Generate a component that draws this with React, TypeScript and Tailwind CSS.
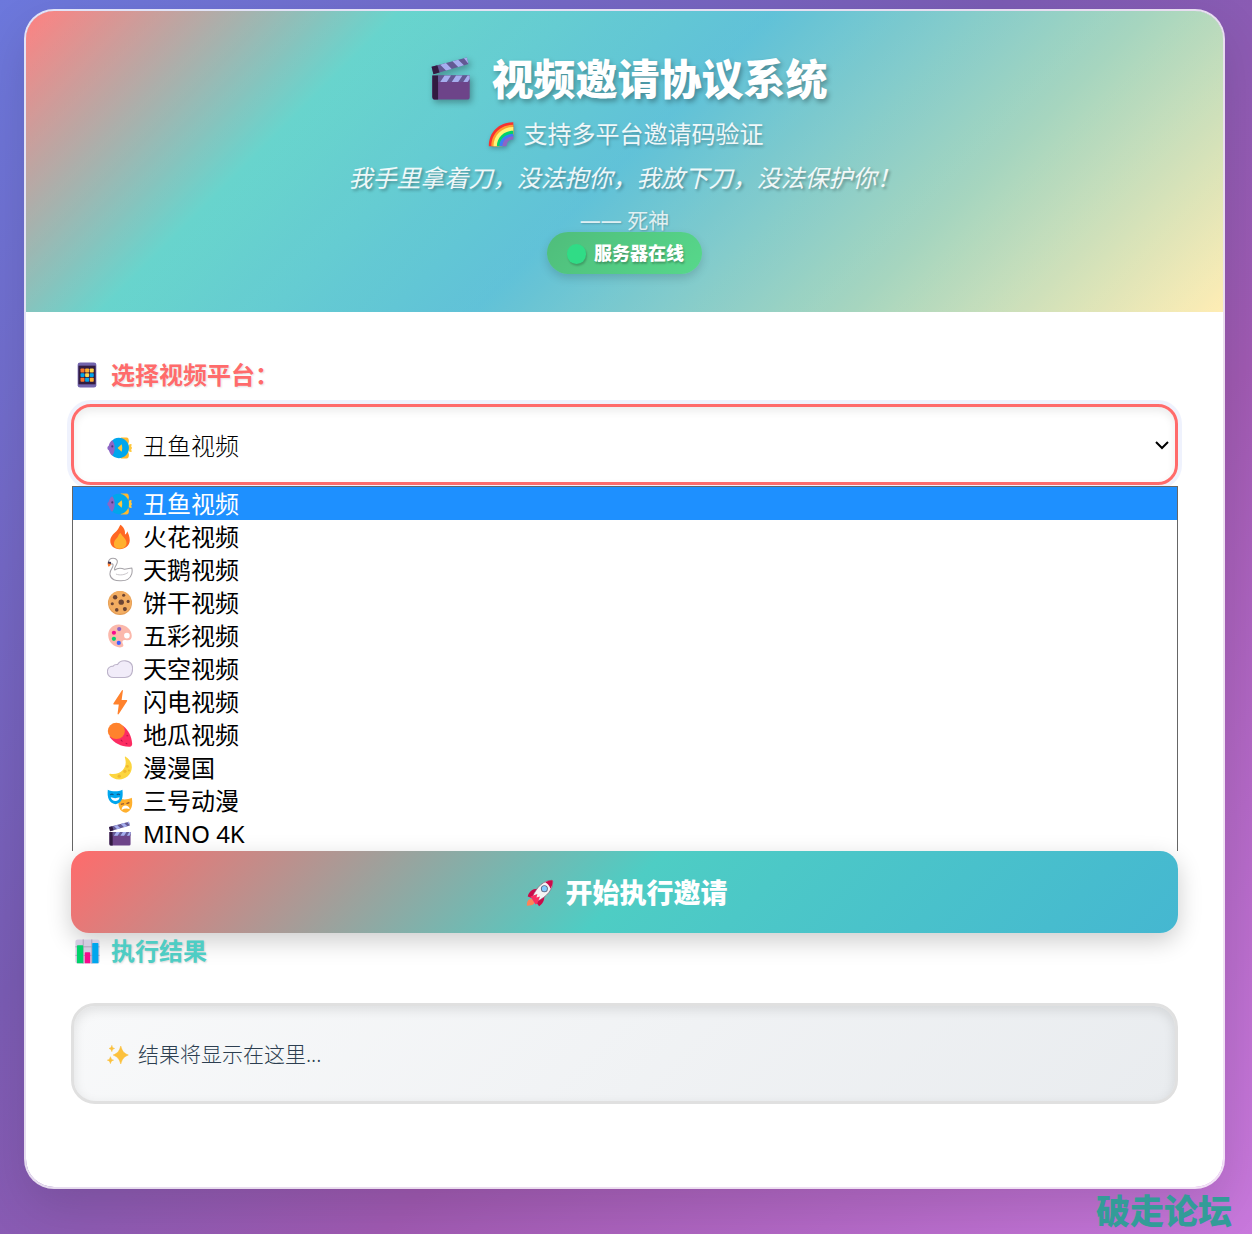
import { useState } from 'react';
import type { ReactNode } from 'react';

type IconProps = { className?: string };

function Glyph({ className = 'size-[26px]', children }: IconProps & { children: ReactNode }) {
  return (
    <svg viewBox="0 0 32 32" aria-hidden="true" className={`shrink-0 ${className}`}>
      {children}
    </svg>
  );
}

function Clapper({ className }: IconProps) {
  return (
    <Glyph className={className}>
      <path d="M3 13.500h26v15a1.800 1.800 0 0 1-1.800 1.800H5A2 2 0 0 1 3 28.300z" fill="#6d4489" />
      <path d="M3 13.500h4v16.800H5a2 2 0 0 1-2-2z" fill="#321b41" />
      <path d="M7 13.500h22V18H7z" fill="#635994" />
      <path d="M11.500 13.500H16L13 18H8.500zM19.500 13.500H24L21 18h-4.500zM27.500 13.500H29V16l-1.500 2h-3z" fill="#a6aeef" />
      <path d="M2.500 7.500 27 1l1.200 4.500L3.800 12.700z" fill="#635994" />
      <path d="m2.500 7.500 4-1 1.500 5-4.200 1.200z" fill="#321b41" />
      <path d="m8.500 6 4-1.100 4 4.100-4 1.100zM17 3.700l4-1.100 4 3.900-4 1.100zM25 1.600 27 1l1.200 4.500z" fill="#a6aeef" />
    </Glyph>
  );
}

function Rainbow({ className }: IconProps) {
  return (
    <Glyph className={className}>
      <path d="M1 30C1 13 13 1.500 30 1.500V17c-7 0-13 6-13 13z" fill="#f8312f" />
      <path d="M4 30C4 15 15 4.500 30 4.500V17c-7 0-13 6-13 13z" fill="#ff9f2e" />
      <path d="M6.500 30C6.500 16.500 16.500 7 30 7v10c-7 0-13 6-13 13z" fill="#fff478" />
      <path d="M10.500 30C10.500 19.500 19 11.500 30 11.500v6c-7 0-13 6-13 12.500z" fill="#00d26a" />
      <path d="M13.500 30C13.500 21 21 15 30 15v4c-7 0-12 4-12 11z" fill="#3f7cf5" />
      <path d="M17 30c0-7 6-12 13-12v4c-5 0-8 3-8 8z" fill="#8d65c5" />
    </Glyph>
  );
}

function Phone({ className }: IconProps) {
  return (
    <Glyph className={className}>
      <rect x="4.500" y="0.500" width="23" height="31" rx="3" fill="#7264ad" />
      <path d="M5.500 4.500h21v23h-21z" fill="#321b41" />
      {['#f9782d', '#ffb02e', '#ffd447', '#00a6ed', '#ffd447', '#00a6ed', '#f9782d', '#00a6ed', '#ffb02e'].map((fill, i) => (
        <rect key={i} x={8 + (i % 3) * 5.700} y={8 + Math.floor(i / 3) * 5.700} width="4.900" height="4.900" rx="1" fill={fill} />
      ))}
    </Glyph>
  );
}

function Fish({ className }: IconProps) {
  return (
    <Glyph className={className}>
      <path d="M17 3h7c2 0 3 2 3 5l-1 4v8l1 4c0 3-1 5-3 5h-7z" fill="#ffb92e" />
      <path d="M26 16c0-3 1-5 3.500-5 1 0 1 1 .6 2-.5 1-.5 1.500.5 2v2c-1 .5-1 1-.5 2 .4 1 .4 2-.6 2-2.500 0-3.500-2-3.500-5z" fill="#ffc83d" />
      <path d="M14.500 3.500C21.500 3.500 27 9 27 16s-5.500 12.500-12.500 12.500c-4 0-7.500-2-9.500-5v-15c2-3 5.500-5 9.500-5z" fill="#00a6ed" />
      <path d="M6.500 6.500c4 5 4 14 0 19-3-2-3.500-5-4.500-7-1-.5-1.500-1.500-1.500-2.500s.5-2 1.500-2.500c1-3 1.500-5 4.500-7z" fill="#8d65c5" />
      <circle cx="6.500" cy="14" r="1.300" fill="#4b3a79" />
      <path d="m13 16 5-4.500c1 2.500 1 6.500 0 9z" fill="#ffc83d" />
    </Glyph>
  );
}

function Fire({ className }: IconProps) {
  return (
    <Glyph className={className}>
      <path d="M16.500 1c-2 3-2 5-5 8C8 12 4 16 4 21c0 6 5 10 11.500 10S28 27 28 20c0-5-2-8-3-11-.5 2-2 4-3 4 1-5-2-10-5.500-12z" fill="#ff6723" />
      <path d="M16.500 11c-2 1-2 3-4 6-2 2-4 4-4 7.500 0 4 3.500 6 7.500 6s8-2 8-7c0-5-4-7-7.500-12.500z" fill="#ffb02e" />
    </Glyph>
  );
}

function Swan({ className }: IconProps) {
  return (
    <Glyph className={className}>
      <path d="M1.500 7C2 3 4.500 1.500 7.500 1.500c5 0 6.500 4 4 8-1.500 3-3 4.500-2 6.500 4-3 8-2.500 12-1l9-1.500c1 4 .5 11-5 14-3 2-13 2.500-17 .5-6-3-6-9-2.500-14C8 11 8 8 6 8.500 4.500 9 3 8.500 1.500 7z" fill="#fff" stroke="#a6a3a8" strokeWidth="1.300" strokeLinejoin="round" />
      <path d="M11 21c5 2 11 1 15-2" fill="none" stroke="#bbb8bd" strokeWidth="1" />
      <path d="M1 7.500 5 8c0 2-1.500 3-3 4-1-1-1.300-3-1-4.500z" fill="#ff7b2e" />
      <path d="M1.500 5.500 5 6v2.500L1 8z" fill="#40324a" />
    </Glyph>
  );
}

function Cookie({ className }: IconProps) {
  return (
    <Glyph className={className}>
      <circle cx="16" cy="16" r="14.800" fill="#e39d56" />
      <circle cx="16" cy="15.300" r="14" fill="#f3ad61" />
      <g fill="#6d4534">
        <circle cx="10" cy="9" r="2.700" />
        <circle cx="20.500" cy="6.500" r="1.900" />
        <circle cx="17.500" cy="15" r="3.300" />
        <circle cx="26" cy="14" r="1.900" />
        <circle cx="6.500" cy="17" r="1.900" />
        <circle cx="12" cy="24.500" r="2.200" />
        <circle cx="22" cy="23.500" r="2.500" />
      </g>
    </Glyph>
  );
}

function Palette({ className }: IconProps) {
  return (
    <Glyph className={className}>
      <path
        fillRule="evenodd"
        d="M16 2C7 1 1 8 1.500 15.500 2 24 8 29.500 16 30c4 0 5-2 3.500-4.500-1.500-3 0-5 3.500-4.500 5 1 7.500-1 7.500-5C30.500 8 24 2.500 16 2zm8.500 10a3.500 3.500 0 1 1 0 7 3.500 3.500 0 0 1 0-7z"
        fill="#fbb8ab"
      />
      <circle cx="15" cy="7.500" r="2.600" fill="#8d65c5" />
      <circle cx="8.500" cy="12" r="2.600" fill="#f70a8d" />
      <circle cx="8.500" cy="19.500" r="2.600" fill="#00d26a" />
      <circle cx="14.500" cy="24.500" r="2.600" fill="#3f5fff" />
    </Glyph>
  );
}

function Cloud({ className }: IconProps) {
  return (
    <Glyph className={className}>
      <path d="M8 26.500c-4.500 0-7.500-3-7.500-7.500 0-4 3-6.500 7-6.500 1-1.500 3-2.200 5.500-2C15 7 19 5.500 23 6c5 .6 8.500 4 8.500 9.500 0 7-3.500 11-9.500 11z" fill="#f1ecf9" stroke="#bcb3c9" strokeWidth="1.400" />
    </Glyph>
  );
}

function Bolt({ className }: IconProps) {
  return (
    <Glyph className={className}>
      <path d="M18.500 1.500 8 17.500c-.5 1 0 1.500 1 1.500h5.500L13 30.500c0 1 1 1 1.500.3L24.700 15c.5-1 0-1.500-1-1.500H18L19.600 2c0-1-.6-1-1.100-.5z" fill="#ff822d" />
    </Glyph>
  );
}

function Potato({ className }: IconProps) {
  return (
    <Glyph className={className}>
      <path d="M20 5c7 6 10 12 11 22 0 2.500-2 3.500-4 3.500C17 30 9 26 3 18z" fill="#fc2c62" />
      <path d="m17 22 2 2m5-7 2 0m-3 9 2 1" stroke="#ba1246" strokeWidth="1.300" fill="none" />
      <ellipse cx="11.500" cy="11" rx="10.500" ry="10" fill="#ff822d" />
    </Glyph>
  );
}

function Moon({ className }: IconProps) {
  return (
    <Glyph className={className}>
      <path d="M23 2c5 3 8 8 7.500 14C30 24 23 30 15 30c-5 0-9-2-12-5.500-.5-1 0-1.500 1-1.300 6 1 12-.5 15.500-4.700S24 9 22 3c-.2-1 .3-1.400 1-1z" fill="#fcd53f" />
      <g fill="#efb830">
        <circle cx="25" cy="14" r="1.800" />
        <circle cx="22" cy="20" r="2" />
        <circle cx="15" cy="26" r="2" />
        <circle cx="27" cy="19" r="1.200" />
      </g>
    </Glyph>
  );
}

function Masks({ className }: IconProps) {
  return (
    <Glyph className={className}>
      <path d="M14.500 13c5 1.500 11 1.500 16-1 1.500 8 .5 16-7 18.500-8-1-10.500-8-9-17.500z" fill="#ffb02e" />
      <path d="m17 20 4-.5m3-.5 3.500-1" stroke="#7d4533" strokeWidth="1.300" fill="none" />
      <path d="M18 27c0-7 9-7 10-1q-5-2-10 1z" fill="#fff" />
      <path d="M1 2c5 2.500 13 2.500 18 0 1 9 0 16-8.500 18C2 18 0 11 1 2z" fill="#00a6ed" />
      <path d="M4 8.500q2-2 4 0m4 0q2-2 4 0" stroke="#15598b" strokeWidth="1.300" fill="none" />
      <path d="M4.500 11.500q5.500 2 11 0c0 6-10 6-11 0z" fill="#fff" />
    </Glyph>
  );
}

function Rocket({ className }: IconProps) {
  return (
    <Glyph className={className}>
      <path d="M1 30.500c0-5 1-7 5-8l4 4c-1 3-4 4-9 4z" fill="#ff8257" />
      <path d="M2 20c1-5 5-9 11-9l8 8c0 6-2 9-6 12l-3-4-5-5z" fill="#ca0b4a" />
      <path d="M29.500 1.500C20 2 13 8 7 21l5 5C24 20 31 12 30.500 2.500c0-.6-.4-1-1-1z" fill="#f4f4f4" stroke="#8b4969" strokeWidth="0.700" />
      <path d="M22 4c2.500-1.500 5-2.500 7.500-2.500.6 0 1 .4 1 1 0 3-1 6-2.500 8.500C27 8 25 5 22 4z" fill="#ca0b4a" />
      <path d="m5 20 8-3-1 4 4-1-3 8-2 1z" fill="#f92f60" />
      <circle cx="21" cy="11" r="4" fill="#5c6b87" />
      <circle cx="21" cy="11" r="2.900" fill="#83cbff" />
    </Glyph>
  );
}

function Chart({ className }: IconProps) {
  return (
    <Glyph className={className}>
      <rect x="0.500" y="0.500" width="31" height="31" rx="3" fill="#d3cbe0" />
      <path d="M.5 10h31M.5 21h31M10.500.5v31M21.500.5v31" stroke="#aaa0b8" strokeWidth="1.200" />
      <path d="M2.500 9q0-1 1-1h6q1 0 1 1v22h-8z" fill="#00d26a" />
      <path d="M12.500 18q0-1 1-1h5q1 0 1 1v13h-7z" fill="#f70a8d" />
      <path d="M22 6q0-1 1-1h6q1 0 1 1v25h-8z" fill="#00a6ed" />
    </Glyph>
  );
}

function Sparkles({ className }: IconProps) {
  return (
    <Glyph className={className}>
      <g fill="#fcc13d" stroke="#fcc13d" strokeWidth="0.800" strokeLinejoin="round">
        <path d="M20 3c2.500 8 4.500 10.500 11 13-6.500 3-8.500 5-11 13-2.500-8-4.500-10-11-13 6.500-2.500 8.500-5 11-13z" />
        <path d="M7 2c.8 3 1.300 3.700 4 4.500-2.700.8-3.200 1.500-4 4.500-.8-3-1.300-3.700-4-4.500C5.700 5.700 6.200 5 7 2zM5 18.500c1 3.500 1.500 4.100 4.500 5-3 .9-3.500 1.500-4.500 5-1-3.500-1.500-4.100-4.500-5 3-.9 3.500-1.500 4.500-5z" />
      </g>
    </Glyph>
  );
}

const platforms = [
  { name: '丑鱼视频', Icon: Fish },
  { name: '火花视频', Icon: Fire },
  { name: '天鹅视频', Icon: Swan },
  { name: '饼干视频', Icon: Cookie },
  { name: '五彩视频', Icon: Palette },
  { name: '天空视频', Icon: Cloud },
  { name: '闪电视频', Icon: Bolt },
  { name: '地瓜视频', Icon: Potato },
  { name: '漫漫国', Icon: Moon },
  { name: '三号动漫', Icon: Masks },
  { name: 'MINO 4K', Icon: Clapper },
];

export default function App() {
  const [selected, setSelected] = useState(0);
  const SelectedIcon = platforms[selected].Icon;

  return (
    <div
      lang="zh-CN"
      className="min-h-screen bg-[linear-gradient(135deg,#6c78dc_0%,#7a5cb4_40%,#a05ab2_65%,#c878dc_100%)] pt-[9px] font-['Noto_Sans','Noto_Sans_CJK_SC',sans-serif]"
    >
      <main className="mr-[27px] ml-6 overflow-hidden rounded-[30px] border-2 border-white/80 bg-white bg-clip-padding shadow-[0_20px_50px_rgba(0,0,0,0.12)]">
        <header className="flex flex-col items-center bg-[linear-gradient(rgba(255,255,255,0.15),rgba(255,255,255,0.15)),linear-gradient(135deg,#ff6b6b_0%,#4ecdc4_25%,#45b7d1_50%,#96ceb4_75%,#ffeaa7_100%)] pt-9 pb-[38px] text-white">
          <h1 className="flex items-center text-[42px] leading-[64px] font-extrabold text-shadow-[2px_3px_5px_rgba(0,0,0,0.3)]">
            <span className="flex w-[70px] justify-center pr-2.5">
              <Clapper className="size-[46px] drop-shadow-[2px_3px_3px_rgba(0,0,0,0.3)]" />
            </span>
            视频邀请协议系统
          </h1>
          <p className="mt-[5px] flex items-center gap-[9px] pl-0.5 text-2xl leading-9 text-white/90 text-shadow-[1px_2px_3px_rgba(0,0,0,0.25)]">
            <Rainbow className="size-[27px] drop-shadow-[1px_2px_2px_rgba(0,0,0,0.25)]" />
            支持多平台邀请码验证
          </p>
          <p className="mt-2 text-2xl leading-9 text-white/90 italic text-shadow-[2px_2px_3px_rgba(0,0,0,0.3)]">
            我手里拿着刀，没法抱你，我放下刀，没法保护你！
          </p>
          <p className="mt-3 text-[21px] leading-6 text-white/80 text-shadow-[1px_1px_2px_rgba(0,0,0,0.2)]">—— 死神</p>
          <div
            role="status"
            className="flex items-center gap-2 rounded-full bg-[linear-gradient(135deg,#4fbd7b,#57d88b)] pt-2 pb-[7px] pr-[18px] pl-5 text-lg leading-[27px] font-extrabold shadow-[0_4px_10px_rgba(0,0,0,0.15)] text-shadow-[1px_2px_2px_rgba(0,0,0,0.25)]"
          >
            <span className="h-5 w-[19px] rounded-full bg-[#30dc86] shadow-[1px_2px_2px_rgba(0,0,0,0.2)]" />
            服务器在线
          </div>
        </header>

        <div className="px-[45px] pt-[45px] pb-[83px]">
          <label
            htmlFor="platform"
            className="mb-[11px] flex items-center gap-[11px] pl-[3px] text-2xl leading-9 font-bold text-[#ff6b6b] text-shadow-[1px_1px_2px_rgba(0,0,0,0.12)]"
          >
            <Phone />
            选择视频平台：
          </label>

          <div className="grid items-center rounded-[20px] shadow-[0_0_0_4px_rgba(102,126,234,0.1)]">
            <select
              id="platform"
              value={selected}
              onChange={(e) => setSelected(Number(e.target.value))}
              className="col-start-1 row-start-1 h-[81px] w-full appearance-none rounded-[20px] border-3 border-[#ff6b6b] bg-white pt-[3px] pl-[69px] text-2xl font-light text-black shadow-[inset_0_4px_8px_rgba(0,0,0,0.08)] outline-none"
            >
              {platforms.map(({ name }, i) => (
                <option key={name} value={i}>
                  {name}
                </option>
              ))}
            </select>
            <span className="pointer-events-none col-start-1 row-start-1 flex items-center justify-between pr-2 pl-9">
              <SelectedIcon className="mt-1.5 size-[26px]" />
              <svg viewBox="0 0 16 16" className="size-4" fill="none" stroke="#000" strokeWidth="2" aria-hidden="true">
                <path d="m2 5 6 6 6-6" />
              </svg>
            </span>
          </div>

          <ul role="listbox" aria-label="选择视频平台" className="mt-px ml-px border border-b-0 border-[#666] bg-white pb-px">
            {platforms.map(({ name, Icon }, i) => (
              <li key={name} role="presentation">
                <button
                  type="button"
                  role="option"
                  aria-selected={i === selected}
                  onClick={() => setSelected(i)}
                  className={`flex h-[33px] w-full items-center gap-2.5 pt-px pl-[34px] text-2xl leading-8 ${
                    i === selected ? 'bg-[#1e90ff] text-white' : 'text-black'
                  }`}
                >
                  <Icon />
                  {name}
                </button>
              </li>
            ))}
          </ul>

          <button
            type="button"
            className="flex h-[82px] w-full items-center justify-center gap-3 rounded-[18px] bg-[linear-gradient(135deg,#ff6b6b_0%,#4ecdc4_50%,#45b7d1_100%)] pt-0.5 pl-1 text-[27px] font-extrabold text-white shadow-[0_8px_25px_rgba(0,0,0,0.2)]"
          >
            <Rocket className="size-7" />
            开始执行邀请
          </button>

          <h2 className="flex items-center gap-[11px] pl-1 text-2xl leading-9 font-bold text-[#4ecdc4] text-shadow-[1px_1px_2px_rgba(0,0,0,0.15)]">
            <Chart className="size-[25px]" />
            执行结果
          </h2>
          <output className="mt-[34px] flex h-[101px] items-center gap-[9px] rounded-3xl border-3 border-[#e0e0e0] bg-[linear-gradient(135deg,#f8f9fa,#e9ecef)] px-[33px] pt-0.5 text-[21px] font-light text-[#2c3e50] shadow-[inset_0_4px_12px_rgba(0,0,0,0.1)]">
            <Sparkles className="size-[22px]" />
            结果将显示在这里...
          </output>
        </div>
      </main>
      <footer className="pr-5 text-right text-[34px] leading-[45px] font-black text-[#339c98]">破走论坛</footer>
    </div>
  );
}
